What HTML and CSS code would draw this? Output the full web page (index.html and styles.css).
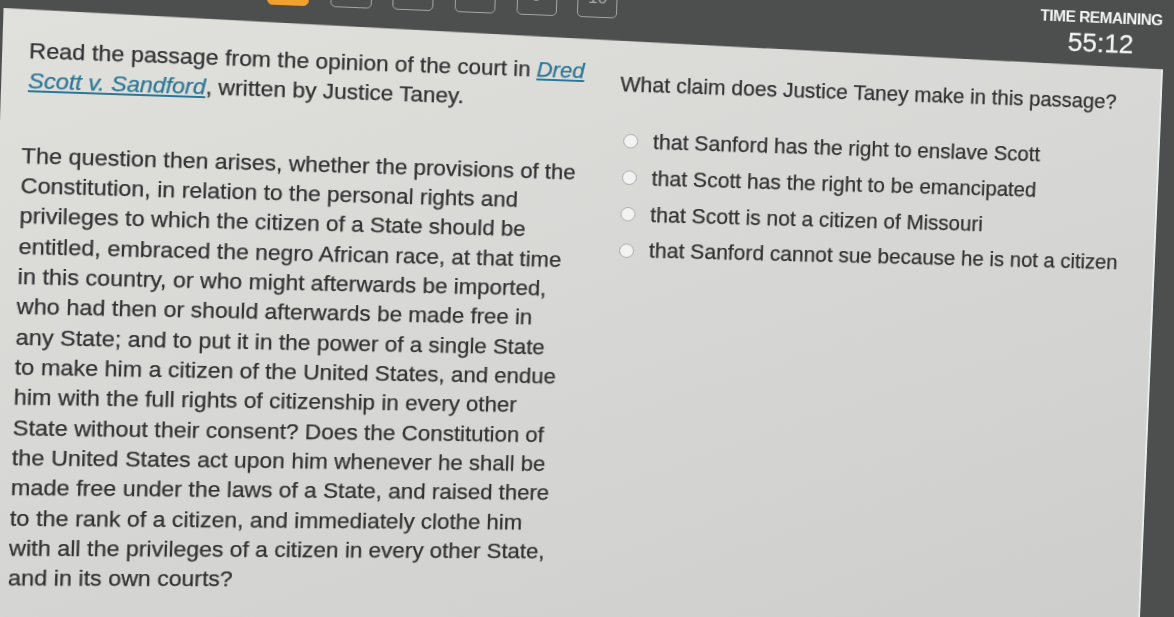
FILE: index.html
```html
<!DOCTYPE html>
<html lang="en">
<head>
<meta charset="utf-8">
<title>Dred Scott v. Sandford – Question</title>
<link rel="stylesheet" href="styles.css">
</head>
<body>
<div class="screen">
  <header class="topbar">
    <nav class="qnav">
      <span class="qbox current">5</span>
      <span class="qbox">6</span>
      <span class="qbox">7</span>
      <span class="qbox">8</span>
      <span class="qbox">9</span>
      <span class="qbox">10</span>
    </nav>
    <div class="timer">
      <div class="timer-label">TIME REMAINING</div>
      <div class="timer-value">55:12</div>
    </div>
  </header>
  <main class="panel">
    <section class="passage-col">
      <p class="intro">Read the passage from the opinion of the court in <a class="case" href="#">Dred<br>Scott v. Sandford</a>, written by Justice Taney.</p>
      <p class="passage">The question then arises, whether the provisions of the<br>
Constitution, in relation to the personal rights and<br>
privileges to which the citizen of a State should be<br>
entitled, embraced the negro African race, at that time<br>
in this country, or who might afterwards be imported,<br>
who had then or should afterwards be made free in<br>
any State; and to put it in the power of a single State<br>
to make him a citizen of the United States, and endue<br>
him with the full rights of citizenship in every other<br>
State without their consent? Does the Constitution of<br>
the United States act upon him whenever he shall be<br>
made free under the laws of a State, and raised there<br>
to the rank of a citizen, and immediately clothe him<br>
with all the privileges of a citizen in every other State,<br>
and in its own courts?</p>
    </section>
    <section class="question-col">
      <p class="question">What claim does Justice Taney make in this passage?</p>
      <ul class="options">
        <li class="option"><span class="radio"></span><span>that Sanford has the right to enslave Scott</span></li>
        <li class="option"><span class="radio"></span><span>that Scott has the right to be emancipated</span></li>
        <li class="option"><span class="radio"></span><span>that Scott is not a citizen of Missouri</span></li>
        <li class="option"><span class="radio"></span><span>that Sanford cannot sue because he is not a citizen</span></li>
      </ul>
    </section>
  </main>
</div>
</body>
</html>
```
FILE: styles.css
```css
html, body {
  margin: 0;
  padding: 0;
  height: 100%;
  overflow: hidden;
  background: #4b4e4d;
}

.screen {
  width: 1280px;
  height: 730px;
  background: #4c4f4e;
  font-family: "Liberation Sans", Arial, sans-serif;
  transform-origin: 0 0;
  transform: matrix3d(1.078140, 0.042842, 0, 0.0000670487,
                      -0.031781, 1.004066, 0, 0.00000891092,
                      0, 0, 1, 0,
                      3.55191, 7.98628, 0, 1) translate(-20px, -80px);
  filter: blur(0.4px);
}

.topbar {
  height: 80px;
  box-sizing: border-box;
  display: flex;
  align-items: flex-start;
  padding: 0 98px 0 20px;
}

.qnav {
  display: flex;
  gap: 20.65px;
  margin: 26px 0 0 248px;
}

.qbox {
  width: 40px;
  height: 40px;
  box-sizing: border-box;
  border: 1.5px solid #a3a6a5;
  border-radius: 5px;
  color: #a9acab;
  font-size: 17px;
  display: flex;
  align-items: center;
  justify-content: center;
}

.qbox.current {
  background: #f0a12e;
  border-color: #f0a12e;
  color: #ffffff;
}

.timer {
  margin-left: auto;
  width: 140px;
  padding-top: 35px;
  text-align: center;
  color: #f3f4f4;
}

.timer-label {
  font-size: 16.5px;
  font-weight: 700;
  letter-spacing: -0.55px;
  line-height: 18px;
}

.timer-value {
  font-size: 28px;
  line-height: 30px;
  margin-top: 3.6px;
  -webkit-text-stroke: 0.3px currentColor;
}

.panel {
  margin-left: 20px;
  width: 1160px;
  height: 650px;
  box-sizing: border-box;
  display: flex;
  clip-path: polygon(0 0, 100% 17px, 100% 100%, 0 100%);
  background: linear-gradient(160deg, #e0e0dc 0%, #d7d8d5 45%, #cdcecc 100%);
  border-right: 2px solid #e6ecee;
  color: #303131;
  -webkit-text-stroke: 0.25px currentColor;
}

.passage-col {
  width: 573px;
  flex: none;
  box-sizing: border-box;
  padding: 26.6px 0 0 25px;
  font-size: 22px;
  line-height: 30.35px;
}

.intro {
  margin: 0;
  white-space: nowrap;
}

.case {
  color: #2c7795;
  font-style: italic;
  text-decoration: underline;
}

.passage {
  margin: 44.3px 0 0 -4px;
  white-space: nowrap;
}

.question-col {
  flex: 1;
  padding: 38.9px 0 0 24px;
  font-size: 21.5px;
  line-height: 30px;
}

.question {
  margin: 0 0 29.1px;
  white-space: nowrap;
}

.options {
  list-style: none;
  margin: 0;
  padding: 0;
  display: flex;
  flex-direction: column;
  gap: 7.8px;
}

.option {
  display: flex;
  align-items: center;
  gap: 15px;
  padding-left: 5px;
  white-space: nowrap;
}

.radio {
  width: 15px;
  height: 15px;
  flex: none;
  box-sizing: border-box;
  border-radius: 50%;
  border: 1.5px solid #a9aaa8;
  background: #f3f3f1;
  -webkit-text-stroke: 0;
}
```
